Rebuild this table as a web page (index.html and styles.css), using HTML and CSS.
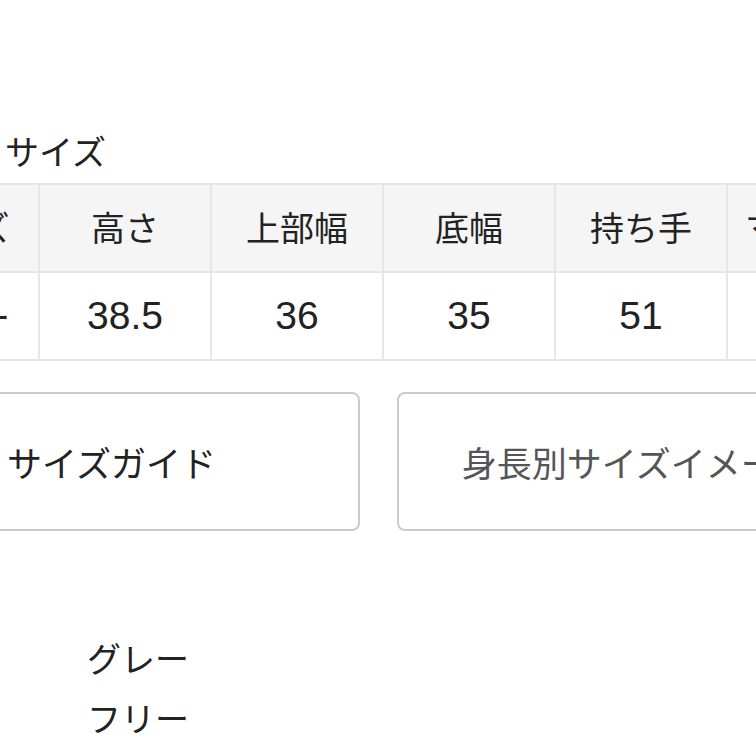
FILE: index.html
```html
<!DOCTYPE html>
<html lang="ja">
<head>
<meta charset="utf-8">
<title>サイズ</title>
<link rel="stylesheet" href="styles.css">
</head>
<body>
<div class="page">
  <h2 class="title">サイズ</h2>
  <table class="size-table">
    <tr class="head">
      <th class="c0">サイズ</th>
      <th>高さ</th>
      <th>上部幅</th>
      <th>底幅</th>
      <th>持ち手</th>
      <th>マチ奥行</th>
    </tr>
    <tr class="body">
      <td class="c0">フリー</td>
      <td class="num">38.5</td>
      <td class="num">36</td>
      <td class="num">35</td>
      <td class="num">51</td>
      <td class="num">12</td>
    </tr>
  </table>
  <div class="buttons">
    <div class="btn btn-guide">サイズガイド</div>
    <div class="btn btn-image">身長別サイズイメージ</div>
  </div>
  <ul class="specs">
    <li class="spec">グレー</li>
    <li class="spec">フリー</li>
  </ul>
</div>
</body>
</html>
```
FILE: styles.css
```css
html, body {
  margin: 0;
  padding: 0;
  background: #ffffff;
}
body {
  width: 756px;
  height: 756px;
  overflow: hidden;
  font-family: "Noto Sans CJK JP", "Noto Sans", sans-serif;
  color: #222222;
}
.page {
  width: 756px;
}
.title {
  margin: 131px 0 12px 0;
  padding-left: 5px;
  font-size: 34px;
  font-weight: 400;
  line-height: 40px;
  height: 40px;
}
.size-table {
  margin-left: -116px;
  width: 1014px;
  border-collapse: collapse;
  table-layout: fixed;
  font-size: 34px;
}
.size-table th,
.size-table td {
  width: 172px;
  height: 88px;
  padding: 0;
  text-align: center;
  font-weight: 400;
  border: 2px solid #e6e6e6;
  box-sizing: border-box;
  white-space: nowrap;
  overflow: hidden;
}
.size-table th.c0,
.size-table td.c0 {
  width: 154px;
  padding-right: 6px;
}
.size-table th {
  background: #f5f5f5;
  padding-bottom: 4px;
}
.size-table td {
  background: #ffffff;
}
.size-table td.num {
  font-family: "Liberation Sans", Arial, sans-serif;
  font-size: 39px;
}
.buttons {
  display: flex;
  gap: 37px;
  margin-left: -118px;
  margin-top: 31px;
}
.btn {
  flex: 0 0 478px;
  height: 139px;
  box-sizing: border-box;
  border: 2px solid #cacaca;
  border-radius: 8px;
  display: flex;
  align-items: center;
  justify-content: center;
  font-size: 35px;
  white-space: nowrap;
  overflow: hidden;
}
.btn-guide {
  color: #222222;
  padding-right: 19px;
}
.btn-image {
  color: #555555;
}
.specs {
  list-style: none;
  margin: 97px 0 0 0;
  padding: 0 0 0 87px;
}
.spec {
  line-height: 60px;
  font-size: 34px;
}
```
